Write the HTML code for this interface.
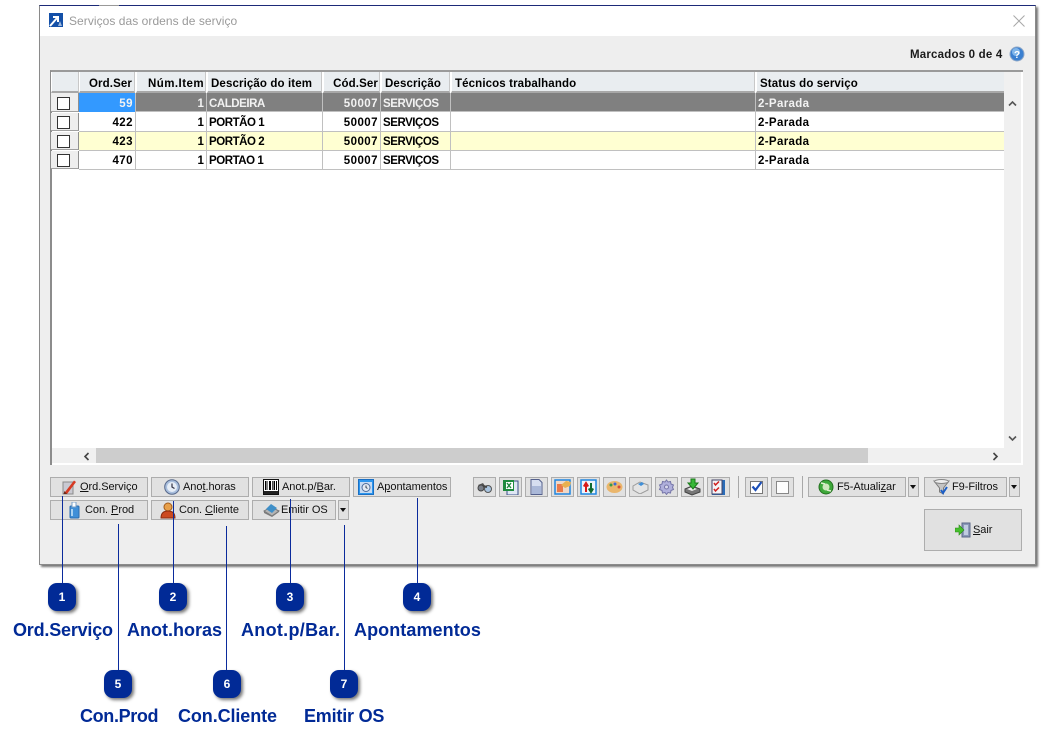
<!DOCTYPE html>
<html><head><meta charset="utf-8">
<style>
html,body{margin:0;padding:0;background:#fff}
#p{position:relative;width:1058px;height:745px;overflow:hidden;background:#fff;font-family:"DejaVu Sans","Liberation Sans",sans-serif}
#p div,#p svg,#p span.a{position:absolute}
.win{left:39px;top:5px;width:995px;height:558px;background:#eeeeee;border:1px solid #8a8a8a;border-top:1px solid #1c2a78;box-shadow:2px 2px 2px #777}
.tb{left:40px;top:6px;width:995px;height:30px;background:#fff}
.t{white-space:nowrap;font-family:"Liberation Sans",sans-serif;font-size:12px;line-height:14px}
.g{font-weight:bold;color:#000;font-size:11.5px;letter-spacing:.12px}
.up{letter-spacing:-.45px}
.num{letter-spacing:.45px}
.st{letter-spacing:.35px}
.r{text-align:right}
.hd{background:#e9edf0;border-left:1px solid #fff;border-right:1px solid #c8c8c8;border-bottom:2px solid #a8a8a8;height:19px;top:72px;box-sizing:content-box}
.row{left:79px;width:925px;height:18px;border-bottom:1px solid #c0c0c0}
.v{width:1px;top:93px;height:76px;background:#c0c0c0}
.ck{left:57px;width:11px;height:11px;border:1px solid #333;background:#fff}
.cc{left:51px;width:27px;height:18px;background:#eeeeee;border-bottom:1px solid #a0a0a0;border-right:1px solid #909090}
.b{box-sizing:border-box;background:#e1e1e1;border:1px solid #adadad;height:20px;top:477px}
.bt{font-family:"Liberation Sans",sans-serif;font-size:11px;color:#111;white-space:nowrap;line-height:14px;letter-spacing:-.05px}
.u{text-decoration:underline}
.ln{width:1px;background:#0b2b9c}
.bd{width:28px;height:28px;border-radius:9px;background:#012a96;box-shadow:2px 2px 3px #777;color:#fff;font:bold 12px/28px "Liberation Sans",sans-serif;text-align:center}
.lb{white-space:nowrap;color:#012a96;font:bold 18px/22px "Liberation Sans",sans-serif}
.tri{width:0;height:0;border-left:3.5px solid transparent;border-right:3.5px solid transparent;border-top:4px solid #111}
</style></head><body><div id="p">
<div class="win"></div>
<div class="tb"></div>
<div style="left:99px;top:5px;width:20px;height:1px;background:#999"></div>

<svg style="left:49px;top:13px" width="14" height="14" viewBox="0 0 14 14"><rect width="14" height="14" fill="#1450a8"/><path d="M1 13L8 5M4 4h5v5" stroke="#fff" stroke-width="2" fill="none"/><path d="M9 13l2-5 2 5z" fill="#9db7dc"/></svg>
<div class="t" style="left:69px;top:14px;color:#9a9a9a;letter-spacing:.05px">Serviços das ordens de serviço</div>
<svg style="left:1013px;top:15px" width="12" height="12" viewBox="0 0 12 12"><path d="M.5.5l11 11M11.5.5l-11 11" stroke="#a8a8a8" stroke-width="1"/></svg>

<div class="t" style="left:910px;top:48px;font-weight:bold;font-size:11.5px;color:#1a1a1a;letter-spacing:.2px">Marcados 0 de 4</div>
<svg style="left:1009px;top:46px" width="16" height="16" viewBox="0 0 16 16"><circle cx="8" cy="8" r="7" fill="#3a7fd0" stroke="#8fa8c8"/><circle cx="7" cy="6" r="4" fill="#7fb5ea"/><text x="8" y="12" text-anchor="middle" font-family="Liberation Sans" font-weight="bold" font-size="10" fill="#fff">?</text></svg>

<!-- grid -->
<div style="left:50px;top:70px;width:973px;height:395px;background:#fff;border-top:2px solid #9a9a9a;border-left:2px solid #8c8c8c;box-sizing:border-box"></div>
<div style="left:1004px;top:72px;width:17px;height:391px;background:#f0f0f0"></div>
<div style="left:52px;top:448px;width:969px;height:15px;background:#f0f0f0"></div>
<div style="left:96px;top:448px;width:772px;height:15px;background:#cdcdcd"></div>

<div class="hd" style="left:51px;width:26px"></div>
<div class="hd" style="left:79px;width:54px"></div>
<div class="hd" style="left:136px;width:68px"></div>
<div class="hd" style="left:207px;width:113px"></div>
<div class="hd" style="left:323px;width:55px"></div>
<div class="hd" style="left:381px;width:67px"></div>
<div class="hd" style="left:451px;width:302px"></div>
<div class="hd" style="left:756px;width:247px;border-right:0"></div>

<div class="row" style="top:93px;background:#808080"></div>
<div class="row" style="top:113px;height:18px;background:#fff"></div>
<div class="row" style="top:132px;height:18px;background:#ffffd2"></div>
<div class="row" style="top:151px;height:18px;background:#fff"></div>
<div style="left:79px;top:93px;width:56px;height:19px;background:#3399ff"></div>

<div class="cc" style="top:93px"></div><div class="cc" style="top:113px;height:17px"></div><div class="cc" style="top:132px;height:17px"></div><div class="cc" style="top:151px;height:17px"></div>
<div class="ck" style="top:97px"></div><div class="ck" style="top:116px"></div><div class="ck" style="top:135px"></div><div class="ck" style="top:154px"></div>

<div class="v" style="left:135px"></div><div class="v" style="left:206px"></div><div class="v" style="left:322px"></div><div class="v" style="left:380px"></div><div class="v" style="left:450px"></div><div class="v" style="left:755px"></div>

<div class="t g r" style="left:79px;width:53px;top:77px">Ord.Ser</div>
<div class="t g r num" style="left:136px;width:68px;top:77px">Núm.Item</div>
<div class="t g" style="left:211px;top:77px">Descrição do item</div>
<div class="t g r" style="left:323px;width:55px;top:77px">Cód.Ser</div>
<div class="t g" style="left:385px;top:77px">Descrição</div>
<div class="t g" style="left:455px;top:77px">Técnicos trabalhando</div>
<div class="t g" style="left:760px;top:77px">Status do serviço</div>

<div class="t g r num" style="left:79px;width:54px;top:97px;color:#f2f2f2">59</div>
<div class="t g r" style="left:136px;width:68px;top:97px;color:#f2f2f2">1</div>
<div class="t g up" style="left:209px;top:97px;color:#f2f2f2">CALDEIRA</div>
<div class="t g r num" style="left:323px;width:55px;top:97px;color:#f2f2f2">50007</div>
<div class="t g up" style="left:383px;top:97px;color:#f2f2f2">SERVIÇOS</div>
<div class="t g st" style="left:758px;top:97px;color:#f2f2f2">2-Parada</div>

<div class="t g r num" style="left:79px;width:54px;top:116px">422</div>
<div class="t g r" style="left:136px;width:68px;top:116px">1</div>
<div class="t g up" style="left:209px;top:116px">PORTÃO 1</div>
<div class="t g r num" style="left:323px;width:55px;top:116px">50007</div>
<div class="t g up" style="left:383px;top:116px">SERVIÇOS</div>
<div class="t g st" style="left:758px;top:116px">2-Parada</div>

<div class="t g r num" style="left:79px;width:54px;top:135px">423</div>
<div class="t g r" style="left:136px;width:68px;top:135px">1</div>
<div class="t g up" style="left:209px;top:135px">PORTÃO 2</div>
<div class="t g r num" style="left:323px;width:55px;top:135px">50007</div>
<div class="t g up" style="left:383px;top:135px">SERVIÇOS</div>
<div class="t g st" style="left:758px;top:135px">2-Parada</div>

<div class="t g r num" style="left:79px;width:54px;top:154px">470</div>
<div class="t g r" style="left:136px;width:68px;top:154px">1</div>
<div class="t g up" style="left:209px;top:154px">PORTAO 1</div>
<div class="t g r num" style="left:323px;width:55px;top:154px">50007</div>
<div class="t g up" style="left:383px;top:154px">SERVIÇOS</div>
<div class="t g st" style="left:758px;top:154px">2-Parada</div>

<svg style="left:1008px;top:100px" width="9" height="7" viewBox="0 0 9 7"><path d="M1 5.500l3.500-3.500 3.500 3.500" stroke="#555" stroke-width="1.600" fill="none"/></svg>
<svg style="left:1008px;top:435px" width="9" height="7" viewBox="0 0 9 7"><path d="M1 1.500l3.500 3.500 3.500-3.500" stroke="#555" stroke-width="1.600" fill="none"/></svg>
<svg style="left:83px;top:452px" width="7" height="9" viewBox="0 0 7 9"><path d="M5.500 1L2 4.500 5.500 8" stroke="#444" stroke-width="1.600" fill="none"/></svg>
<svg style="left:992px;top:452px" width="7" height="9" viewBox="0 0 7 9"><path d="M1.500 1L5 4.500 1.500 8" stroke="#444" stroke-width="1.600" fill="none"/></svg>

<!-- left buttons -->
<div class="b" style="left:50px;width:98px"></div>
<svg style="left:61px;top:479px" width="16" height="16" viewBox="0 0 16 16"><path d="M2 3h10v12H2z" fill="#c9c9d2" stroke="#8a8a8a"/><path d="M2.500 15L13 1.500l2 1.500L6 15z" fill="#d63a22"/><path d="M2.500 15l1-3 2.500 3z" fill="#6b2a1a"/></svg>
<div class="bt" style="left:80px;top:480px"><span class="u">O</span>rd.Serviço</div>

<div class="b" style="left:151px;width:98px"></div>
<svg style="left:164px;top:479px" width="16" height="16" viewBox="0 0 16 16"><circle cx="8" cy="8" r="7.300" fill="#a8bedd" stroke="#56688a"/><circle cx="8" cy="8" r="5" fill="#e6edf6"/><path d="M8 4.500V8l2.500 1.500" stroke="#334" stroke-width="1.200" fill="none"/></svg>
<div class="bt" style="left:183px;top:480px">Ano<span class="u">t</span>.horas</div>

<div class="b" style="left:252px;width:98px"></div>
<svg style="left:263px;top:479px" width="16" height="16" viewBox="0 0 16 16"><rect x=".5" y=".5" width="15" height="15" fill="#fff" stroke="#111"/><path d="M2 2h1.500v9H2zM4.500 2H5v9h-.5zM6 2h2v9H6zM9 2h.7v9H9zM10.500 2h1.500v9h-1.500zM13 2h1v9h-1z" fill="#000"/><rect x="1" y="12" width="14" height="3" fill="#222"/></svg>
<div class="bt" style="left:282px;top:480px">Anot.p/<span class="u">B</span>ar.</div>

<div class="b" style="left:353px;width:98px"></div>
<svg style="left:358px;top:479px" width="16" height="16" viewBox="0 0 16 16"><rect x=".5" y=".5" width="15" height="15" fill="#2c96ee" stroke="#1a6fc4"/><rect x="2" y="3" width="12" height="11" fill="#c6dbf3"/><circle cx="8" cy="8.500" r="4" fill="#e4ebf4" stroke="#4c6c9c"/><path d="M8 6.500v2l1.500 1" stroke="#345" fill="none"/></svg>
<div class="bt" style="left:377px;top:480px">A<span class="u">p</span>ontamentos</div>

<div class="b" style="left:50px;width:98px;top:500px"></div>
<svg style="left:67px;top:502px" width="14" height="17" viewBox="0 0 14 17"><rect x="3" y="4" width="9" height="12" rx="1" fill="#3f8fd8" stroke="#2a6cb0"/><rect x="5" y="0" width="4" height="5" fill="#fff" stroke="#7aa0c8"/><rect x="4" y="7" width="2" height="7" fill="#a9d2f2"/></svg>
<div class="bt" style="left:85px;top:503px">Con. <span class="u">P</span>rod</div>

<div class="b" style="left:151px;width:98px;top:500px"></div>
<svg style="left:160px;top:502px" width="16" height="17" viewBox="0 0 16 17"><circle cx="8" cy="5" r="4" fill="#e8a04a" stroke="#a35c1c"/><path d="M1 16c0-5 3-7 7-7s7 2 7 7z" fill="#cc4a20" stroke="#8a2c10"/></svg>
<div class="bt" style="left:179px;top:503px">Con. <span class="u">C</span>liente</div>

<div class="b" style="left:252px;width:84px;top:500px"></div>
<svg style="left:263px;top:502px" width="17" height="16" viewBox="0 0 17 16"><path d="M1 9l7-4 8 4-7 5z" fill="#b4b4b4" stroke="#777"/><path d="M3 7l5-5 6 4-5 5z" fill="#3f8fc8"/><path d="M1 9v2l8 4 7-5V9l-7 5z" fill="#7c7c7c"/></svg>
<div class="bt" style="left:281px;top:503px">Emitir OS</div>
<div class="b" style="left:338px;width:11px;top:500px"></div><div class="tri" style="left:340px;top:508px"></div>

<!-- icon toolbar -->
<div class="b" style="left:473px;width:23px"></div><div class="b" style="left:499px;width:23px"></div><div class="b" style="left:525px;width:23px"></div><div class="b" style="left:551px;width:23px"></div><div class="b" style="left:577px;width:23px"></div><div class="b" style="left:603px;width:23px"></div><div class="b" style="left:629px;width:23px"></div><div class="b" style="left:655px;width:23px"></div><div class="b" style="left:681px;width:23px"></div><div class="b" style="left:707px;width:23px"></div>

<svg style="left:476px;top:479px" width="17" height="16" viewBox="0 0 17 16"><path d="M2 6l5-2 2 3-3 3z" fill="#555"/><circle cx="5" cy="9" r="3" fill="#7a7f88" stroke="#444"/><circle cx="12" cy="10" r="3.500" fill="#a8c4e0" stroke="#555"/><path d="M7 7l4 1" stroke="#444" stroke-width="2"/></svg>
<svg style="left:502px;top:479px" width="17" height="16" viewBox="0 0 17 16"><rect x="5" y="2" width="11" height="14" fill="#dfe7f4" stroke="#3a4f88"/><rect x="1" y="1" width="11" height="11" fill="#1f8a3e"/><rect x="4" y="3" width="7" height="7" fill="#fff"/><path d="M5 4l4 5M9 4l-4 5" stroke="#1f8a3e" stroke-width="1.400"/></svg>
<svg style="left:528px;top:479px" width="17" height="16" viewBox="0 0 17 16"><path d="M3 .5h8l3 3V15.500H3z" fill="#d6def0" stroke="#54608c"/><rect x="4" y="7" width="9" height="8" fill="#aab8d8"/></svg>
<svg style="left:554px;top:479px" width="17" height="16" viewBox="0 0 17 16"><rect x="1" y="1" width="15" height="14" fill="#f0d8c8" stroke="#1f86e0" stroke-width="1.500"/><path d="M3 5h6v8H3z" fill="#e8794a"/><path d="M7 6l5-4 5 1-1 4-5 2z" fill="#e8b050"/></svg>
<svg style="left:580px;top:479px" width="17" height="16" viewBox="0 0 17 16"><rect x="1" y="1" width="15" height="14" fill="#eef4fb" stroke="#1f86e0" stroke-width="1.500"/><path d="M6 13V6M3.800 7.500L6 4l2.200 3.500" stroke="#d81818" stroke-width="2" fill="none"/><path d="M11 4v7M8.800 9.500L11 13l2.200-3.500" stroke="#106a30" stroke-width="2" fill="none"/></svg>
<svg style="left:606px;top:480px" width="17" height="14" viewBox="0 0 17 14"><ellipse cx="8.500" cy="7" rx="8" ry="6" fill="#eab66c"/><circle cx="5" cy="5" r="1.500" fill="#3a9a48"/><circle cx="9" cy="4" r="1.500" fill="#3a6ad8"/><circle cx="13" cy="7" r="1.500" fill="#d84a3a"/></svg>
<svg style="left:632px;top:480px" width="17" height="14" viewBox="0 0 17 14"><path d="M1 6l7-4 8 3v5l-8 4-7-4z" fill="#e4e4e4" stroke="#9a9a9a"/><path d="M6 4l4-2 2 2-3 2z" fill="#3f8fd8"/></svg>
<svg style="left:658px;top:479px" width="17" height="16" viewBox="0 0 17 16"><path d="M8.500 1l1.500 2 2.500-.5.500 2.500 2.500 1-1 2.200 1 2.300-2.500 1-.5 2.500-2.500-.5-1.500 2-1.500-2-2.500.5L4 11.500l-2.500-1 1-2.300-1-2.200L4 5l.5-2.500L7 3z" fill="#b0b0dc" stroke="#7676a8"/><circle cx="8.500" cy="8" r="2" fill="#d8d8ec" stroke="#7676a8"/></svg>
<svg style="left:684px;top:478px" width="17" height="18" viewBox="0 0 17 18"><path d="M1 11l7-3 8 3v3l-8 3-7-3z" fill="#777" stroke="#444"/><path d="M3 11l5-2 5 2-5 2z" fill="#eee"/><path d="M7 1h4v4h3l-5 6-5-6h3z" fill="#38b838" stroke="#1a7a1a"/></svg>
<svg style="left:710px;top:479px" width="16" height="16" viewBox="0 0 16 16"><rect x="2" y="1" width="13" height="15" fill="#2a6cb8"/><rect x="2" y="1" width="10" height="14" fill="#f4f4f8" stroke="#446"/><path d="M4 4l1.500 2L9 2.500M4 10l1.500 2L9 8.500" stroke="#d02020" stroke-width="1.500" fill="none"/></svg>

<div style="left:738px;top:476px;width:1px;height:22px;background:#a8a8a8"></div>
<div class="b" style="left:745px;width:23px"></div>
<div style="left:750px;top:481px;width:11px;height:11px;background:#fff;border:1px solid #777"></div>
<svg style="left:750px;top:480px" width="14" height="13" viewBox="0 0 14 13"><path d="M2.500 6.500l3 3.500 6-8" stroke="#1c4fb8" stroke-width="2.200" fill="none"/></svg>
<div class="b" style="left:771px;width:23px"></div>
<div style="left:776px;top:481px;width:11px;height:11px;background:#fdfdfd;border:1px solid #888"></div>
<div style="left:802px;top:476px;width:1px;height:22px;background:#a8a8a8"></div>

<div class="b" style="left:808px;width:98px"></div>
<svg style="left:818px;top:479px" width="16" height="16" viewBox="0 0 16 16"><circle cx="8" cy="8" r="7" fill="#3ea83a" stroke="#23701f"/><circle cx="8" cy="8" r="3.500" fill="#cfe8bc"/><path d="M3 4l4 1M13 12l-4-1" stroke="#e0f0d0" stroke-width="1.500"/></svg>
<div class="bt" style="left:837px;top:480px">F5-Atuali<span class="u">z</span>ar</div>
<div class="b" style="left:908px;width:11px"></div><div class="tri" style="left:910px;top:485px"></div>

<div class="b" style="left:924px;width:83px"></div>
<svg style="left:933px;top:479px" width="17" height="17" viewBox="0 0 17 17"><path d="M1 2h15l-5.500 7v6l-4-2V9z" fill="#c4c4c4" stroke="#7a7a7a"/><ellipse cx="8.500" cy="2.500" rx="7" ry="2" fill="#eee" stroke="#888"/><path d="M8 11l2 3 4-6" stroke="#1c5fc8" stroke-width="2" fill="none"/></svg>
<div class="bt" style="left:952px;top:480px">F9-Filtros</div>
<div class="b" style="left:1009px;width:11px"></div><div class="tri" style="left:1011px;top:485px"></div>

<div class="b" style="left:924px;top:509px;width:98px;height:42px"></div>
<svg style="left:955px;top:522px" width="16" height="16" viewBox="0 0 16 16"><rect x="7" y="1" width="8" height="14" fill="#8a98b8" stroke="#5a6688"/><rect x="9" y="3" width="4" height="10" fill="#c0cce0"/><path d="M0 6h4V3l5 5-5 5v-3H0z" fill="#46c02c" stroke="#2a8a18" stroke-width=".6"/></svg>
<div class="bt" style="left:973px;top:523px"><span class="u">S</span>air</div>

<!-- callouts -->
<div class="ln" style="left:62px;top:496px;height:87px"></div>
<div class="ln" style="left:173px;top:501px;height:82px"></div>
<div class="ln" style="left:290px;top:499px;height:84px"></div>
<div class="ln" style="left:417px;top:498px;height:85px"></div>
<div class="ln" style="left:118px;top:524px;height:146px"></div>
<div class="ln" style="left:226px;top:526px;height:144px"></div>
<div class="ln" style="left:344px;top:525px;height:145px"></div>

<div class="bd" style="left:48px;top:583px">1</div>
<div class="bd" style="left:159px;top:583px">2</div>
<div class="bd" style="left:276px;top:583px">3</div>
<div class="bd" style="left:403px;top:583px">4</div>
<div class="bd" style="left:104px;top:670px">5</div>
<div class="bd" style="left:213px;top:670px">6</div>
<div class="bd" style="left:330px;top:670px">7</div>

<div class="lb" style="left:13px;top:619px;letter-spacing:-.2px">Ord.Serviço</div>
<div class="lb" style="left:127px;top:619px">Anot.horas</div>
<div class="lb" style="left:241px;top:619px;letter-spacing:.3px">Anot.p/Bar.</div>
<div class="lb" style="left:354px;top:619px;letter-spacing:.08px">Apontamentos</div>
<div class="lb" style="left:80px;top:705px;letter-spacing:-.35px">Con.Prod</div>
<div class="lb" style="left:178px;top:705px;letter-spacing:-.1px">Con.Cliente</div>
<div class="lb" style="left:304px;top:705px;letter-spacing:-.2px">Emitir OS</div>
</div></body></html>
